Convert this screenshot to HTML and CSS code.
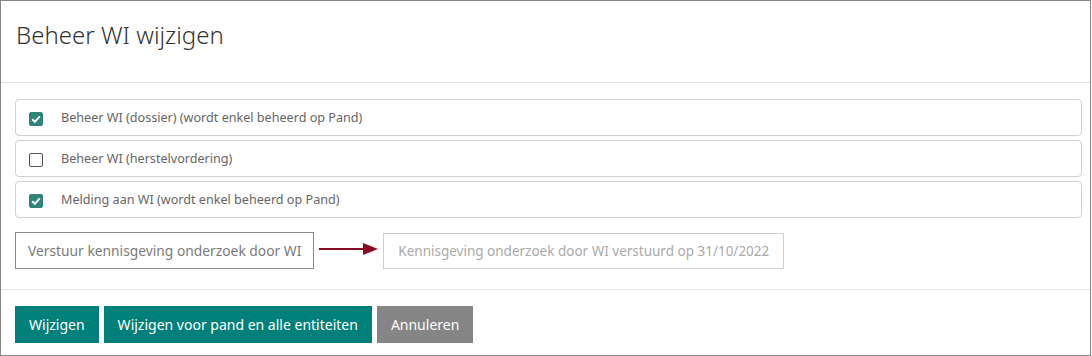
FILE: index.html
```html
<html>
    <head>
        <link rel="stylesheet" href="styles.css">
    </head>
    <body>
        <div class="modal">
            <div class="modal-header">
                <h1 class="modal-title">Beheer WI wijzigen</h1>
            </div>
            <div class="modal-body">
                <label class="check-row">
                    <span class="check checked"><svg viewBox="0 0 14 14" width="14" height="14"><path d="M3.2 7.3 L5.8 9.8 L10.8 4.3" fill="none" stroke="#fff" stroke-width="2"/></svg></span>
                    <span class="check-label">Beheer WI (dossier) (wordt enkel beheerd op Pand)</span>
                </label>
                <label class="check-row">
                    <span class="check"></span>
                    <span class="check-label">Beheer WI (herstelvordering)</span>
                </label>
                <label class="check-row">
                    <span class="check checked"><svg viewBox="0 0 14 14" width="14" height="14"><path d="M3.2 7.3 L5.8 9.8 L10.8 4.3" fill="none" stroke="#fff" stroke-width="2"/></svg></span>
                    <span class="check-label">Melding aan WI (wordt enkel beheerd op Pand)</span>
                </label>
                <div class="notify-row">
                    <button class="notify-button">Verstuur kennisgeving onderzoek door WI</button>
                    <svg class="arrow" width="60" height="12" viewBox="0 0 60 12">
                        <line x1="0" y1="6" x2="45" y2="6" stroke="#8b0a24" stroke-width="2"/>
                        <polygon points="44,0 59,6 44,12" fill="#8b0a24"/>
                    </svg>
                    <div class="notify-status">Kennisgeving onderzoek door WI verstuurd op 31/10/2022</div>
                </div>
            </div>
            <div class="modal-footer">
                <button class="btn btn-primary">Wijzigen</button>
                <button class="btn btn-primary">Wijzigen voor pand en alle entiteiten</button>
                <button class="btn btn-grey">Annuleren</button>
            </div>
        </div>
    </body>
</html>
```

FILE: styles.css
```css
body, html {
    margin: 0;
    background: #fff;
}
body {
    font-family: "Noto Sans", "Open Sans", sans-serif;
    color: #333;
}
.modal {
    width: 1091px;
    height: 356px;
    box-sizing: border-box;
    border: 1px solid #858585;
    display: flex;
    flex-direction: column;
}
.modal-header {
    height: 82px;
    flex-shrink: 0;
    border-bottom: 1px solid #e3e3e3;
    display: flex;
    align-items: center;
    padding: 0 15px;
    box-sizing: border-box;
}
.modal-title {
    margin: 0 0 14px 0;
    font-size: 24px;
    font-weight: 300;
    color: #333;
}
.modal-body {
    padding: 16px 8px 20px 14px;
    display: flex;
    flex-direction: column;
    gap: 4px;
    border-bottom: 1px solid #e3e3e3;
}
.check-row {
    height: 37px;
    box-sizing: border-box;
    border: 1px solid #d0d0d0;
    border-radius: 4px;
    display: flex;
    align-items: center;
    padding-left: 13px;
}
.check {
    width: 14px;
    height: 14px;
    box-sizing: border-box;
    border: 1px solid #555;
    border-radius: 2px;
    margin-right: 18px;
    margin-top: 2px;
    display: flex;
}
.check.checked {
    background: #2e8478;
    border-color: #2e8478;
}
.check svg {
    margin: -1px;
}
.check-label {
    font-size: 12.6px;
    color: #666;
}
.notify-row {
    display: flex;
    align-items: center;
    margin-top: 10px;
}
.notify-button {
    height: 37px;
    padding: 0 12px;
    background: #fff;
    border: 1px solid #8a8a8a;
    font-family: inherit;
    font-size: 13.8px;
    color: #7a7a7a;
}
.arrow {
    margin: 0 4px 4px 5px;
}
.notify-status {
    height: 36px;
    box-sizing: border-box;
    border: 1px solid #cfcfcf;
    padding: 0 14px;
    display: flex;
    align-items: center;
    font-size: 13.5px;
    color: #aaa;
}
.modal-footer {
    display: flex;
    gap: 5px;
    padding: 16px 14px;
}
.btn {
    height: 37px;
    border: none;
    padding: 0 14px;
    font-family: inherit;
    font-size: 14px;
    color: #fff;
}
.btn-primary {
    background: #00807a;
}
.btn-grey {
    background: #858585;
}
```
